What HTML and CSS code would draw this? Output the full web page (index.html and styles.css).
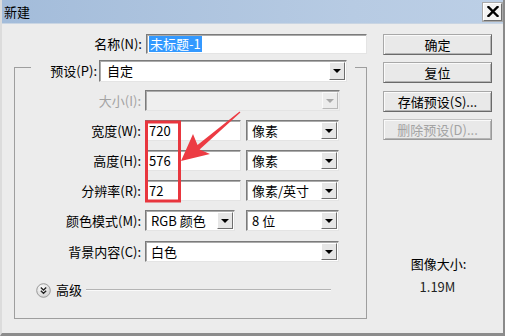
FILE: index.html
```html
<!DOCTYPE html>
<html lang="zh-CN">
<head>
<meta charset="utf-8">
<title>新建</title>
<link rel="stylesheet" href="styles.css">
</head>
<body>
<div class="window">
  <div class="titlebar">
    <span class="title">新建</span>
    <span class="close"><svg width="12" height="11" viewBox="0 0 12 11"><path d="M1.5 1 L10.5 10 M10.5 1 L1.5 10" stroke="#000" stroke-width="2.4" stroke-linecap="square"/></svg></span>
  </div>
  <div class="content">
    <div class="left">
      <div class="name-row">
        <span class="lbl">名称(N):</span>
        <div class="field name-field"><span class="sel">未标题-1</span></div>
      </div>
      <div class="group">
        <div class="preset">
          <span class="plabel">预设(P):</span>
          <div class="field select preset-select"><span class="val">自定</span><span class="arrow"><i class="tri"></i></span></div>
        </div>
        <div class="grow">
          <span class="lbl dis">大小(I):</span>
          <div class="field select disabled"><span class="val"></span><span class="arrow"><i class="tri"></i></span></div>
        </div>
        <div class="grow">
          <span class="lbl">宽度(W):</span>
          <div class="pair">
            <div class="field num"><span class="val">720</span></div>
            <div class="field select unit"><span class="val">像素</span><span class="arrow"><i class="tri"></i></span></div>
          </div>
        </div>
        <div class="grow">
          <span class="lbl">高度(H):</span>
          <div class="pair">
            <div class="field num"><span class="val">576</span></div>
            <div class="field select unit"><span class="val">像素</span><span class="arrow"><i class="tri"></i></span></div>
          </div>
        </div>
        <div class="grow">
          <span class="lbl">分辨率(R):</span>
          <div class="pair">
            <div class="field num"><span class="val">72</span></div>
            <div class="field select unit"><span class="val">像素/英寸</span><span class="arrow"><i class="tri"></i></span></div>
          </div>
        </div>
        <div class="grow">
          <span class="lbl">颜色模式(M):</span>
          <div class="pair">
            <div class="field select mode"><span class="val">RGB 颜色</span><span class="arrow"><i class="tri"></i></span></div>
            <div class="field select unit"><span class="val">8 位</span><span class="arrow"><i class="tri"></i></span></div>
          </div>
        </div>
        <div class="grow last">
          <span class="lbl">背景内容(C):</span>
          <div class="field select"><span class="val">白色</span><span class="arrow"><i class="tri"></i></span></div>
        </div>
        <div class="adv">
          <svg class="adv-icon" width="15" height="15" viewBox="0 0 15 15">
            <defs><radialGradient id="g" cx="0.4" cy="0.35" r="0.7"><stop offset="0" stop-color="#ffffff"/><stop offset="1" stop-color="#cfcfcf"/></radialGradient></defs>
            <circle cx="7.5" cy="7.5" r="6.8" fill="url(#g)" stroke="#9a9a9a" stroke-width="1"/>
            <path d="M4.8 4.6 L7.5 7 L10.2 4.6 M4.8 7.8 L7.5 10.2 L10.2 7.8" fill="none" stroke="#222" stroke-width="1.4"/>
          </svg>
          <span class="adv-text">高级</span>
          <span class="adv-line"></span>
        </div>
      </div>
    </div>
    <div class="right">
      <div class="btn">确定</div>
      <div class="btn b2">复位</div>
      <div class="btn b3">存储预设(S)...</div>
      <div class="btn b4 dis">删除预设(D)...</div>
      <div class="size-label">图像大小:</div>
      <div class="size-value">1.19M</div>
    </div>
  </div>
  <svg class="annot" width="505" height="336" viewBox="0 0 505 336">
    <rect x="146.5" y="122" width="33" height="79" fill="none" stroke="#e8363e" stroke-width="3"/>
    <polygon points="181,161 193,134 197.5,145 239.6,111.5 240.4,112.5 199.6,149.5 210,154" fill="#ec3b43"/>
  </svg>
</div>
</body>
</html>
```

FILE: styles.css
```css
* { box-sizing: border-box; }
html, body { margin: 0; padding: 0; }
body {
  width: 505px;
  height: 336px;
  overflow: hidden;
  font-family: "Noto Sans CJK SC", "Noto Sans", sans-serif;
  font-size: 13px;
  line-height: 16px;
  color: #000;
  background: #ececec;
}
.window {
  position: relative;
  width: 505px;
  height: 336px;
  background: #ececec;
  border-left: 2px solid #dcdcdc;
  border-right: 2px solid #8a8a8a;
  border-bottom: 3px solid #8c8c8c;
}
.titlebar {
  height: 24px;
  display: flex;
  align-items: center;
  justify-content: space-between;
  padding: 0 1px 0 2px;
  background: linear-gradient(to right, #a3bcda, #b7cbe3 70%, #bccfe6);
  border-bottom: 1px solid #c9d5e3;
}
.title { font-size: 13px; }
.close {
  width: 19px;
  height: 18px;
  display: flex;
  align-items: center;
  justify-content: center;
  background: #f3f3f3;
  border: 1px solid;
  border-color: #ffffff #6f6f6f #6f6f6f #ffffff;
  box-shadow: 0 0 0 1px #a9a9a9;
}
.content {
  display: flex;
  padding: 10px 9px 0 12px;
}
.left { width: 353px; }
.right {
  width: 109px;
  margin-left: 16px;
  display: flex;
  flex-direction: column;
}
.name-row {
  display: grid;
  grid-template-columns: 128px 221px;
  column-gap: 4px;
  height: 20px;
  align-items: center;
}
.lbl { text-align: right; white-space: nowrap; }
.dis { color: #a3a3a3; }
.field {
  height: 100%;
  background: #fff;
  border: 1px solid;
  border-color: #7b7b7b #e4e4e4 #e4e4e4 #7b7b7b;
  box-shadow: inset 1px 1px 0 #ababab;
  display: flex;
  align-items: center;
  overflow: hidden;
  white-space: nowrap;
}
.name-field { padding-left: 2px; }
.sel {
  background: #3399ff;
  color: #fff;
  padding: 0 1px;
  line-height: 16px;
}
.val { flex: 1; padding-left: 5px; }
.num .val { padding-left: 3px; }
.arrow {
  width: 16px;
  height: calc(100% - 2px);
  margin-right: 1px;
  background: #e6e6e6;
  border: 1px solid;
  border-color: #ffffff #6e6e6e #6e6e6e #ffffff;
  display: flex;
  align-items: center;
  justify-content: center;
}
.tri {
  width: 0;
  height: 0;
  border-left: 4px solid transparent;
  border-right: 4px solid transparent;
  border-top: 4px solid #000;
}
.disabled { background: #efefef; }
.disabled .arrow { background: #ececec; border-color: #fafafa #b8b8b8 #b8b8b8 #fafafa; }
.disabled .tri { border-top-color: #a8a8a8; }
.group {
  margin-top: 13px;
  width: 353px;
  border: 1px solid #9e9e9e;
  padding-bottom: 20px;
}
.preset {
  display: flex;
  height: 22px;
  margin: -8px 11px 0 16px;
  padding-right: 8px;
  background: #ececec;
  align-items: center;
}
.plabel {
  width: 68px;
  text-align: right;
  padding-right: 2px;
  white-space: nowrap;
}
.preset-select { width: 248px; }
.preset-select .val { padding-left: 7px; }
.grow {
  display: grid;
  grid-template-columns: 126px 195px;
  column-gap: 4px;
  height: 21px;
  align-items: center;
  margin-top: 9px;
}
.grow:nth-child(2) { margin-top: 8px; }
.grow.last { margin-top: 10px; }
.grow.last .field { width: 194px; }
.pair {
  display: flex;
  justify-content: space-between;
  height: 100%;
  width: 194px;
}
.num { width: 96px; }
.unit { width: 93px; }
.mode { width: 90px; }
.adv {
  display: flex;
  align-items: center;
  height: 16px;
  margin-top: 20px;
  padding-left: 21px;
}
.adv-icon { flex: none; }
.adv-text { margin-left: 5px; }
.adv-line {
  width: 245px;
  margin-left: 4px;
  height: 2px;
  border-top: 1px solid #b4b4b4;
  border-bottom: 1px solid #fafafa;
}
.btn {
  height: 21px;
  width: 109px;
  display: flex;
  align-items: center;
  justify-content: center;
  background: #e9e9e9;
  border: 1px solid;
  border-color: #a8a8a8 #6a6a6a #6a6a6a #a8a8a8;
  box-shadow: inset 1px 1px 0 #fafafa, inset -1px -1px 0 #b5b5b5;
  white-space: nowrap;
}
.b2 { margin-top: 7px; }
.b3 { margin-top: 8px; }
.b4 { margin-top: 7px; border-color: #c4c4c4 #9a9a9a #9a9a9a #c4c4c4; }
.size-label {
  margin-top: 116px;
  text-align: center;
  padding-left: 2px;
}
.size-value {
  margin-top: 7px;
  text-align: center;
  font-size: 13px;
  color: #222;
}
.annot {
  position: absolute;
  left: -2px;
  top: 0;
  pointer-events: none;
}
```
